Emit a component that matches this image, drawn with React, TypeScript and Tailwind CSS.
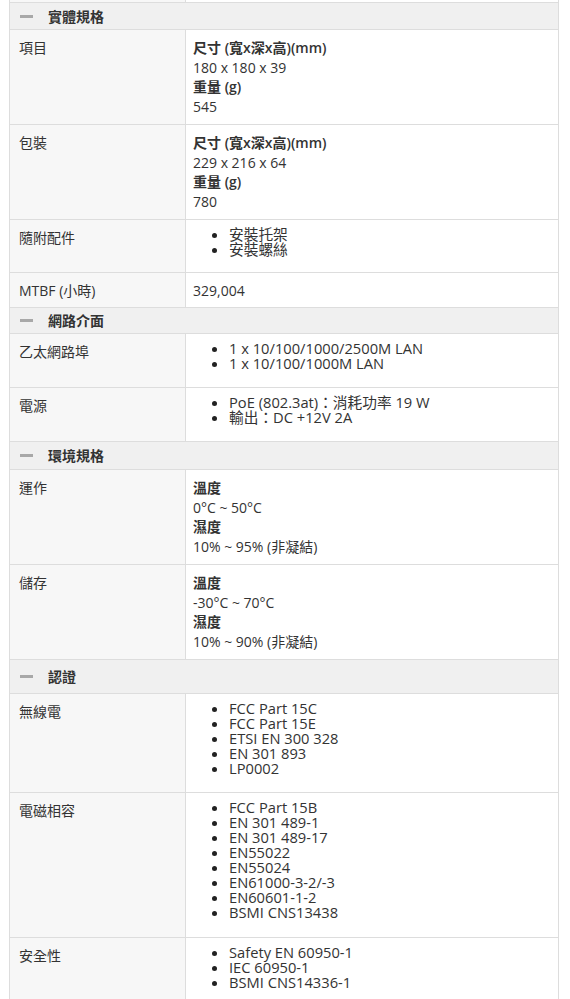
type Row =
  | { kind: 'header'; title: string; h: string }
  | { kind: 'text'; label: string; lines: { text: string; bold?: boolean }[]; h: string }
  | { kind: 'list'; label: string; items: string[]; h: string }

const rows: Row[] = [
  { kind: 'header', title: '實體規格', h: 'h-[27px]' },
  {
    kind: 'text',
    label: '項目',
    h: 'h-[95px]',
    lines: [
      { text: '尺寸 (寬x深x高)(mm)', bold: true },
      { text: '180 x 180 x 39' },
      { text: '重量 (g)', bold: true },
      { text: '545' },
    ],
  },
  {
    kind: 'text',
    label: '包裝',
    h: 'h-[95px]',
    lines: [
      { text: '尺寸 (寬x深x高)(mm)', bold: true },
      { text: '229 x 216 x 64' },
      { text: '重量 (g)', bold: true },
      { text: '780' },
    ],
  },
  { kind: 'list', label: '隨附配件', h: 'h-[53px]', items: ['安裝托架', '安裝螺絲'] },
  { kind: 'text', label: 'MTBF (小時)', h: 'h-[35px]', lines: [{ text: '329,004' }] },
  { kind: 'header', title: '網路介面', h: 'h-[26px]' },
  {
    kind: 'list',
    label: '乙太網路埠',
    h: 'h-[54px]',
    items: ['1 x 10/100/1000/2500M LAN', '1 x 10/100/1000M LAN'],
  },
  {
    kind: 'list',
    label: '電源',
    h: 'h-[54px]',
    items: ['PoE (802.3at)：消耗功率 19 W', '輸出：DC +12V 2A'],
  },
  { kind: 'header', title: '環境規格', h: 'h-[28px]' },
  {
    kind: 'text',
    label: '運作',
    h: 'h-[95px]',
    lines: [
      { text: '溫度', bold: true },
      { text: '0°C ~ 50°C' },
      { text: '濕度', bold: true },
      { text: '10% ~ 95% (非凝結)' },
    ],
  },
  {
    kind: 'text',
    label: '儲存',
    h: 'h-[95px]',
    lines: [
      { text: '溫度', bold: true },
      { text: '-30°C ~ 70°C' },
      { text: '濕度', bold: true },
      { text: '10% ~ 90% (非凝結)' },
    ],
  },
  { kind: 'header', title: '認證', h: 'h-[34px]' },
  {
    kind: 'list',
    label: '無線電',
    h: 'h-[99px]',
    items: ['FCC Part 15C', 'FCC Part 15E', 'ETSI EN 300 328', 'EN 301 893', 'LP0002'],
  },
  {
    kind: 'list',
    label: '電磁相容',
    h: 'h-[145px]',
    items: [
      'FCC Part 15B',
      'EN 301 489-1',
      'EN 301 489-17',
      'EN55022',
      'EN55024',
      'EN61000-3-2/-3',
      'EN60601-1-2',
      'BSMI CNS13438',
    ],
  },
  {
    kind: 'list',
    label: '安全性',
    h: 'h-[80px]',
    items: ['Safety EN 60950-1', 'IEC 60950-1', 'BSMI CNS14336-1'],
  },
]

function Label({ text }: { text: string }) {
  return (
    <div className="w-[176px] shrink-0 bg-[#f7f7f7] border-r border-[#dddddd] pl-[9px] pt-2 leading-[19.5px]">
      {text}
    </div>
  )
}

export default function App() {
  return (
    <div
      className="w-[570px] bg-white text-[14px] text-[#333333]"
      style={{ fontFamily: '"Open Sans", "Noto Sans CJK TC", sans-serif' }}
    >
      <div className="ml-[9px] w-[550px] border-x border-[#dddddd]">
        {/* tail of previous row */}
        <div className="flex h-[3px] border-b border-[#dddddd]">
          <div className="w-[176px] bg-[#f7f7f7] border-r border-[#dddddd]" />
          <div className="flex-1" />
        </div>

        {rows.map((row, i) => {
          if (row.kind === 'header') {
            return (
              <div
                key={i}
                className={`flex items-center bg-[#f0f0f0] border-b border-[#dddddd] pl-[10px] ${row.h}`}
              >
                <span className="block w-[13px] h-[3px] bg-[#a8a8a8]" />
                <span className="ml-[15px] font-semibold text-[14px]">{row.title}</span>
              </div>
            )
          }

          return (
            <div key={i} className={`flex border-b border-[#dddddd] ${row.h}`}>
              <Label text={row.label} />
              {row.kind === 'text' ? (
                <div className="flex-1 pl-[7px] pt-2 leading-[19.5px]">
                  {row.lines.map((l, j) => (
                    <div key={j} className={l.bold ? 'font-semibold' : ''}>
                      {l.text}
                    </div>
                  ))}
                </div>
              ) : (
                <ul className="flex-1 list-disc pl-[43px] pt-[7px] text-[14.7px] leading-[15px] marker:text-[#222222]">
                  {row.items.map((it, j) => (
                    <li key={j}>{it}</li>
                  ))}
                </ul>
              )}
            </div>
          )
        })}
      </div>
    </div>
  )
}
